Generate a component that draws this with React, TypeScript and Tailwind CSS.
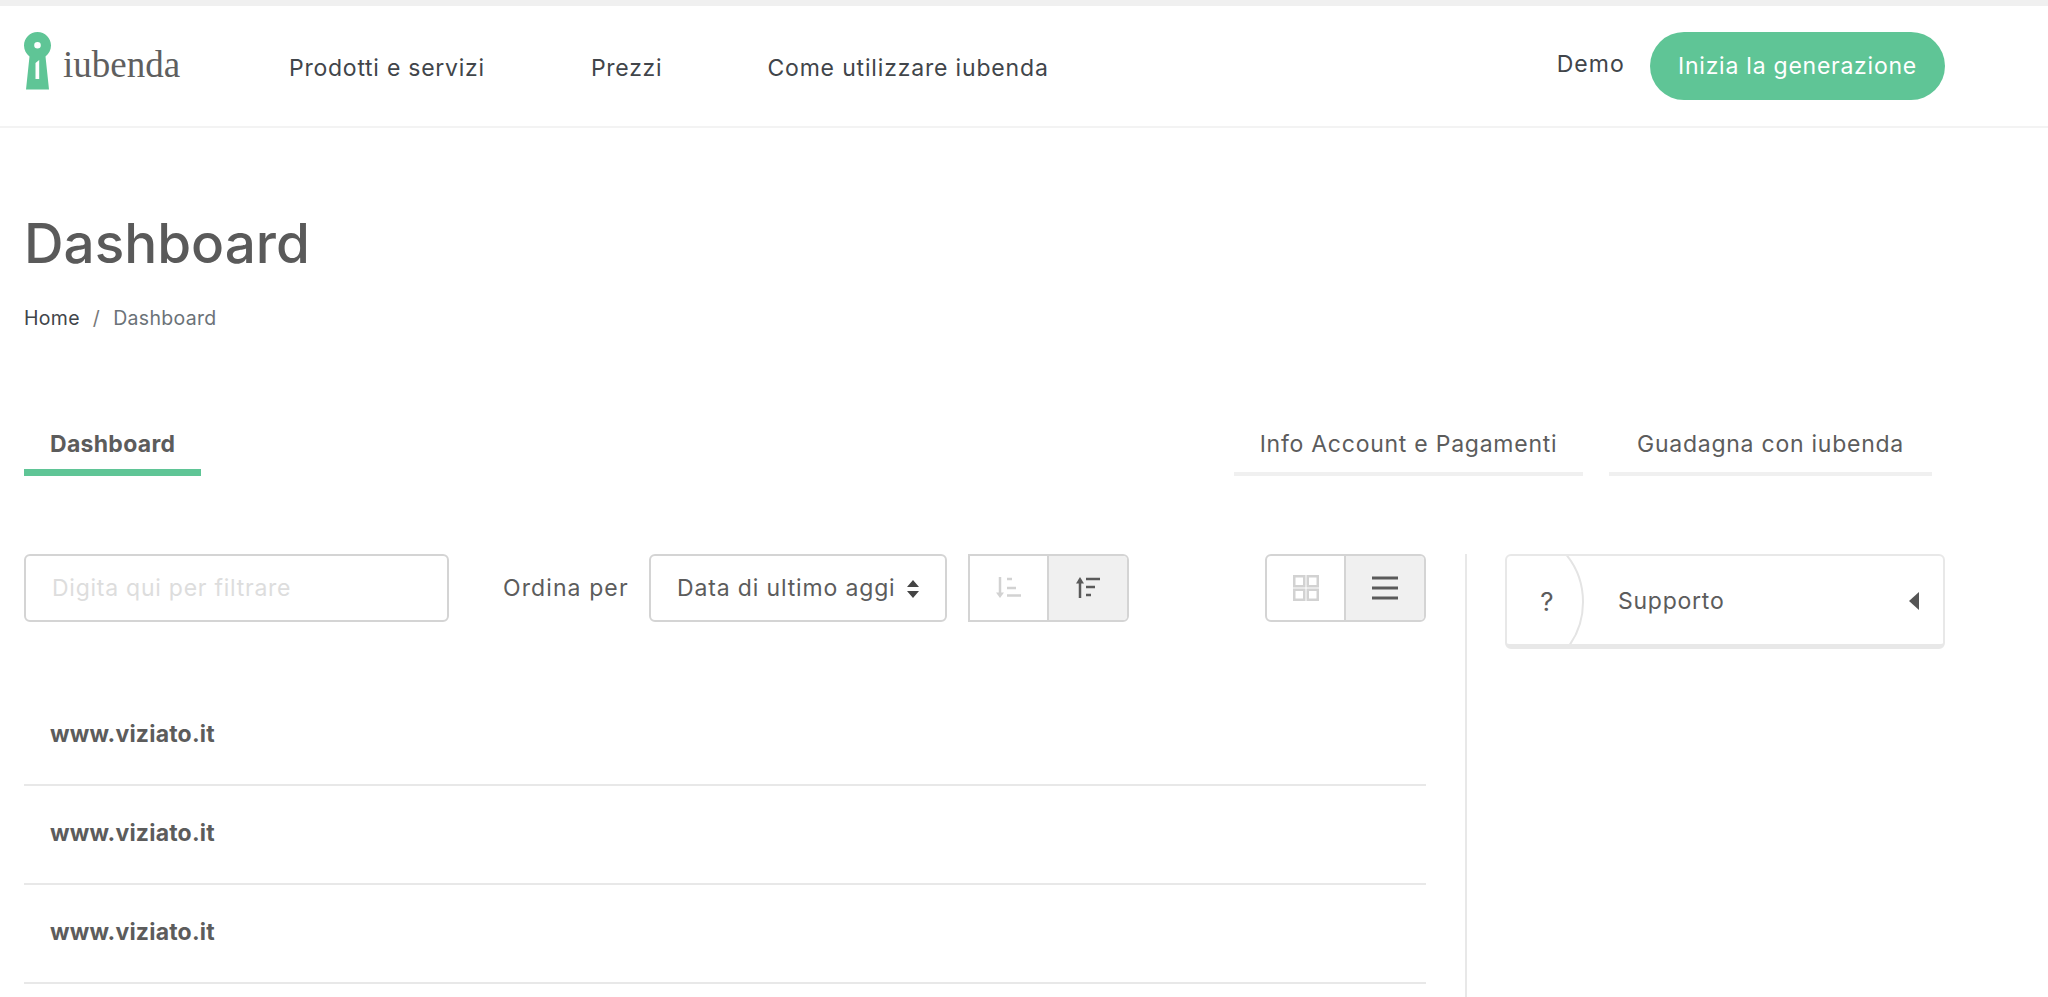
import React from "react";

const Logo = () => (
  <svg width="27" height="58" viewBox="0 0 27 58" className="shrink-0">
    <path fillRule="evenodd" fill="#5fc596" d="M13.500 0C6 0 0 6 0 13.500C0 18 2.200 22 5.500 24.500L2 57.500H25L21.500 24.500C24.800 22 27 18 27 13.500C27 6 21 0 13.500 0ZM13.500 10A3.300 3.300 0 1 1 13.500 16.600A3.300 3.300 0 1 1 13.500 10ZM11.500 31L15.200 28V47H11.500Z" />
  </svg>
);

const SortDown = () => (
  <svg width="26" height="22" viewBox="0 0 26 22" fill="none">
    <path d="M4 0V17" stroke="#d2d2d2" strokeWidth="2.500" />
    <path d="M0 15.500H8L4 21Z" fill="#d2d2d2" />
    <path d="M11 2H16M11 11H20M11 18.500H25" stroke="#d2d2d2" strokeWidth="2.500" />
  </svg>
);
const SortUp = () => (
  <svg width="26" height="22" viewBox="0 0 26 22" fill="none">
    <path d="M5 21V5" stroke="#5a5a5a" strokeWidth="2.500" />
    <path d="M1 6.500H9L5 0Z" fill="#5a5a5a" />
    <path d="M11 2H25M11 10H20M11 18H16" stroke="#5a5a5a" strokeWidth="2.500" />
  </svg>
);
const Grid = () => (
  <svg width="26" height="26" viewBox="0 0 26 26" fill="none" stroke="#d2d2d2" strokeWidth="2.500">
    <rect x="1.250" y="1.250" width="10" height="10" />
    <rect x="14.750" y="1.250" width="10" height="10" />
    <rect x="1.250" y="14.750" width="10" height="10" />
    <rect x="14.750" y="14.750" width="10" height="10" />
  </svg>
);
const Lines = () => (
  <svg width="26" height="24" viewBox="0 0 26 24" fill="none" stroke="#5a5a5a" strokeWidth="3">
    <path d="M0 2H26M0 12H26M0 22H26" />
  </svg>
);

const Row = () => (
  <div className="h-[99px] flex items-center pl-[26px] pb-[3px] border-b-2 border-[#e8e8e8] text-[23px] tracking-[0.2px] font-bold text-[#5c5c5c]">
    www.viziato.it
  </div>
);

export default function App() {
  return (
    <div className="h-[997px] overflow-hidden bg-white font-['Inter',sans-serif] text-[#5c5c5c] text-[23px] tracking-[0.75px]">
      <div className="h-[6px] bg-[#f0f0f0]" />
      <header className="h-[122px] border-b-2 border-[#f3f3f3] flex items-start pl-[24px]">
        <div className="flex items-end gap-[12px] mt-[26px] w-[265px]">
          <Logo />
          <span className="font-['Liberation_Serif',serif] text-[37px] tracking-normal leading-none mb-[7px] text-[#5f5f5f]">iubenda</span>
        </div>
        <nav className="flex mt-[45px] leading-[34px] text-[#41454a]">
          <span>Prodotti e servizi</span>
          <span className="ml-[106px]">Prezzi</span>
          <span className="ml-[105px] tracking-[0.83px]">Come utilizzare iubenda</span>
        </nav>
        <div className="ml-auto mr-[103px] flex items-center gap-[25px] mt-[26px]">
          <span className="text-[#41454a] -mt-[4px] tracking-[1.1px]">Demo</span>
          <span className="h-[68px] w-[295px] rounded-[34px] bg-[#5fc596] text-white flex items-center justify-center pt-[1px]">Inizia la generazione</span>
        </div>
      </header>

      <main className="pl-[24px]">
        <h1 className="mt-[80px] text-[54.800px] leading-[70px] tracking-normal font-medium text-[#5a5a5a]">Dashboard</h1>
        <div className="mt-[26px] flex gap-[13px] text-[19.500px] tracking-[0.3px] leading-[28px]">
          <span className="text-[#41454a]">Home</span>
          <span className="text-[#777777]">/</span>
          <span className="text-[#6b7278]">Dashboard</span>
        </div>

        <div className="mt-[94px] flex items-end pr-[116px]">
          <div className="w-[177px] h-[50px] pl-[26px] pt-[1px] border-b-[7px] border-[#5fc596] font-bold tracking-[0.3px] leading-[34px] text-[#5c5c5c]">Dashboard</div>
          <div className="ml-auto w-[349px] h-[50px] pt-[1px] text-center border-b-[4px] border-[#f0f0f0] leading-[34px]">Info Account e Pagamenti</div>
          <div className="ml-[26px] w-[323px] h-[50px] pt-[1px] text-center border-b-[4px] border-[#f0f0f0] leading-[34px]">Guadagna con iubenda</div>
        </div>

        <div className="mt-[78px] flex items-start">
          <div className="w-[1402px]">
            <div className="flex items-center h-[68px]">
              <div className="w-[425px] h-full rounded-[6px] border-2 border-[#d4d4d4] pl-[26px] pt-[1px] flex items-center text-[#dddddd]">Digita qui per filtrare</div>
              <span className="ml-[54px] w-[125px] pt-[1px] whitespace-nowrap tracking-[1.1px]">Ordina per</span>
              <div className="ml-[21px] w-[298px] h-full rounded-[6px] border-2 border-[#d4d4d4] pl-[26px] pr-[25px] pt-[1px] flex items-center justify-between">
                <span className="whitespace-nowrap tracking-[0.85px]">Data di ultimo aggi</span>
                <svg className="shrink-0" width="14" height="20" viewBox="0 0 14 20" fill="#444444"><path d="M7 1L13 8H1ZM7 19L1 12H13Z" /></svg>
              </div>
              <div className="ml-[21px] w-[161px] h-full flex rounded-r-[6px] border-2 border-[#d4d4d4]">
                <div className="w-[79px] flex items-center justify-center border-r-2 border-[#d4d4d4]"><SortDown /></div>
                <div className="flex-1 flex items-center justify-center bg-[#f0f0f0] rounded-r-[4px]"><SortUp /></div>
              </div>
              <div className="ml-auto w-[161px] h-full flex rounded-[6px] border-2 border-[#d4d4d4]">
                <div className="w-[79px] flex items-center justify-center border-r-2 border-[#d4d4d4]"><Grid /></div>
                <div className="flex-1 flex items-center justify-center bg-[#f0f0f0] rounded-r-[4px]"><Lines /></div>
              </div>
            </div>
            <div className="mt-[65px]">
              <Row />
              <Row />
              <Row />
            </div>
          </div>

          <div className="ml-[39px] h-[500px] border-l-2 border-[#e8e8e8] pl-[38px]">
            <div className="relative w-[440px] h-[95px] rounded-[6px] border-2 border-[#e8e8e8] border-b-[5px] overflow-hidden flex items-center pt-[2px]">
              <div className="absolute left-[-75px] top-[-30px] w-[152px] h-[152px] rounded-full border-2 border-[#e4e4e4]" />
              <span className="w-[80px] text-center text-[26px] tracking-normal">?</span>
              <span className="ml-[31px]">Supporto</span>
              <svg className="ml-auto mr-[24px]" width="10" height="18" viewBox="0 0 10 18" fill="#555555"><path d="M10 0V18L0 9Z" /></svg>
            </div>
          </div>
        </div>
      </main>
    </div>
  );
}
